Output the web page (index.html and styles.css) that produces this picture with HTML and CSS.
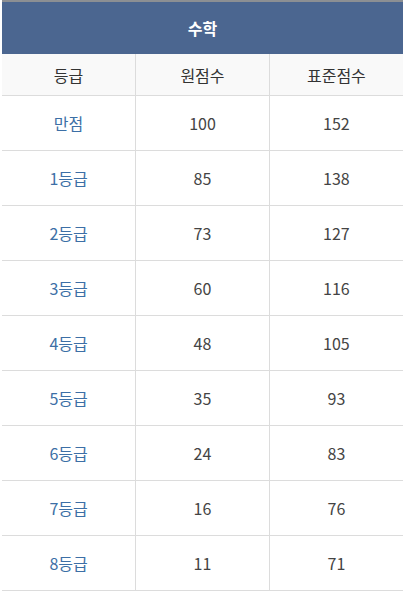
FILE: index.html
```html
<!DOCTYPE html>
<html lang="ko">
<head>
<meta charset="utf-8">
<link rel="stylesheet" href="styles.css">
</head>
<body>
<table class="score">
  <thead>
    <tr><th class="title" colspan="3">수학</th></tr>
    <tr class="head"><th>등급</th><th>원점수</th><th>표준점수</th></tr>
  </thead>
  <tbody>
    <tr><td class="grade">만점</td><td>100</td><td>152</td></tr>
    <tr><td class="grade">1등급</td><td>85</td><td>138</td></tr>
    <tr><td class="grade">2등급</td><td>73</td><td>127</td></tr>
    <tr><td class="grade">3등급</td><td>60</td><td>116</td></tr>
    <tr><td class="grade">4등급</td><td>48</td><td>105</td></tr>
    <tr><td class="grade">5등급</td><td>35</td><td>93</td></tr>
    <tr><td class="grade">6등급</td><td>24</td><td>83</td></tr>
    <tr><td class="grade">7등급</td><td>16</td><td>76</td></tr>
    <tr><td class="grade">8등급</td><td>11</td><td>71</td></tr>
  </tbody>
</table>
</body>
</html>
```
FILE: styles.css
```css
html, body {
  margin: 0;
  padding: 0;
  background: #ffffff;
}
body {
  padding: 0 3px 0 2px;
  font-family: "Noto Sans CJK KR", "Noto Sans", sans-serif;
}
.score {
  width: 401px;
  border-collapse: collapse;
  table-layout: fixed;
  border-top: 2px solid #8c8f93;
}
.score th, .score td {
  text-align: center;
  font-size: 16px;
  padding: 0;
}
.title {
  background: #4b6690;
  color: #ffffff;
  font-weight: bold;
  height: 52px;
  font-size: 16px;
}
.head th {
  background: #f9f9f9;
  color: #333333;
  font-weight: normal;
  height: 41px;
  border-bottom: 1px solid #dcdcdc;
  border-left: 1px solid #dcdcdc;
}
.head th:first-child { border-left: none; }
.score td {
  height: 54px;
  color: #444444;
  border-bottom: 1px solid #dcdcdc;
  border-left: 1px solid #dcdcdc;
}
.score td:first-child { border-left: none; }
.score td.grade { color: #3c6fa6; }
```
